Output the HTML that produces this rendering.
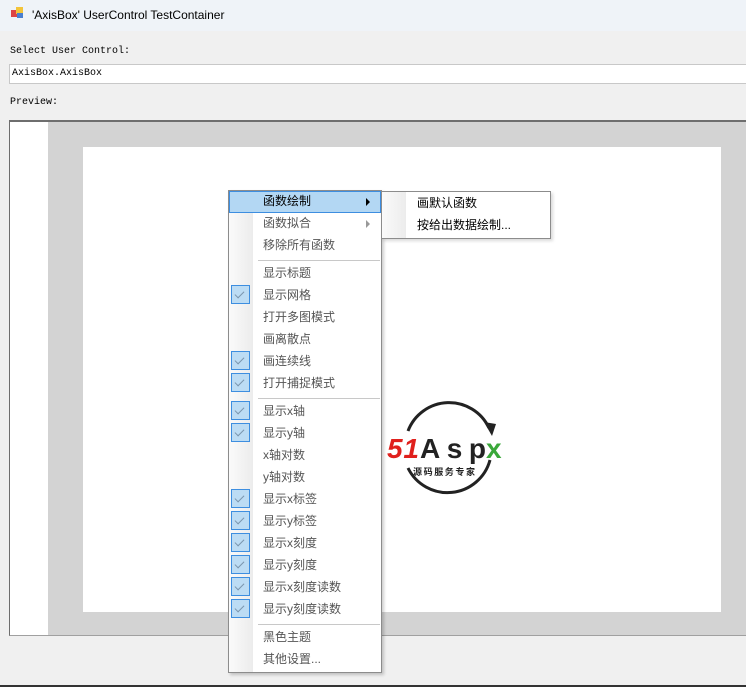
<!DOCTYPE html>
<html><head><meta charset="utf-8"><style>
*{margin:0;padding:0;box-sizing:border-box}
body{width:746px;height:687px;background:#f0f0f0;position:relative;overflow:hidden;font-family:"Liberation Sans","Noto Sans CJK SC",sans-serif}
.a{position:absolute}
.mono{font-family:"Liberation Mono","Noto Sans CJK SC",monospace;font-size:10px;color:#000}
.mi{position:absolute;left:263px;font-size:12px;color:#555;line-height:22px;height:22px}
.cb{position:absolute;left:231px;width:19px;height:19px;background:#bcdcf4;border:1px solid #3d8ee0}
.cb:after{content:"";position:absolute;left:5px;top:3px;width:4px;height:8px;border:solid #7a95ad;border-width:0 1.5px 1.5px 0;transform:rotate(45deg)}
.sep{position:absolute;left:258px;width:122px;height:1px;background:#c8c8c8}
</style></head><body>
<div class="a" style="left:0;top:0;width:746px;height:31px;background:#eff3f8"></div>
<div class="a" style="left:11px;top:10px;width:7px;height:7px;background:#d44"></div>
<div class="a" style="left:16px;top:7px;width:7px;height:7px;background:#f3c43a"></div>
<div class="a" style="left:17px;top:13px;width:6px;height:5px;background:#4a7fd0"></div>
<div class="a" style="left:32px;top:8px;font-size:12px;color:#000">'AxisBox' UserControl TestContainer</div>
<div class="a mono" style="left:10px;top:46px">Select User Control:</div>
<div class="a" style="left:9px;top:64px;width:737px;height:20px;background:#fff;border:1px solid #c8c8c8;border-right:none"></div>
<div class="a mono" style="left:12px;top:68px">AxisBox.AxisBox</div>
<div class="a mono" style="left:10px;top:97px">Preview:</div>
<div class="a" style="left:9px;top:120px;width:737px;height:516px;background:#fff;border-top:2px solid #6e6e6e;border-left:1px solid #6e6e6e;border-bottom:1px solid #a0a0a0"></div>
<div class="a" style="left:48px;top:122px;width:698px;height:513px;background:#d3d3d3"></div>
<div class="a" style="left:83px;top:147px;width:638px;height:465px;background:#fff"></div>
<div class="a" style="left:0;top:685px;width:746px;height:2px;background:#333"></div>
<svg class="a" style="left:380px;top:398px" width="140" height="100">
<path d="M28 33 A44 44 0 0 1 109 30" fill="none" stroke="#222" stroke-width="3"/>
<path d="M104 24 L112 38 L116 26 Z" fill="#222"/>
<path d="M110 62 A44 44 0 0 1 28 70" fill="none" stroke="#222" stroke-width="3"/>
<text x="7" y="60" font-family="Liberation Sans" font-weight="bold" font-style="italic" font-size="28" fill="#e0201d" textLength="32">51</text>
<text x="40" y="60" font-family="Liberation Sans" font-weight="bold" font-size="28" fill="#222" textLength="66">Asp</text>
<text x="106" y="60" font-family="Liberation Sans" font-weight="bold" font-size="28" fill="#3aa83a">x</text>
<text x="33" y="77" font-family="Noto Sans CJK SC" font-size="9" font-weight="bold" fill="#222" textLength="62">源码服务专家</text>
</svg>
<div class="a" style="left:228px;top:190px;width:154px;height:483px;background:#fff;border:1px solid #8c8c8c;box-shadow:2px 2px 3px rgba(0,0,0,.2)"></div>
<div class="a" style="left:229px;top:191px;width:24px;height:481px;background:linear-gradient(90deg,#fafafa,#ececec)"></div>
<div class="a" style="left:229px;top:191px;width:152px;height:22px;background:#b3d7f3;border:1px solid #3d8ee0"></div>
<div class="mi" style="top:190px;color:#000">函数绘制</div>
<div class="a" style="left:366px;top:198px;border-left:4px solid #000;border-top:4px solid transparent;border-bottom:4px solid transparent"></div>
<div class="mi" style="top:212px">函数拟合</div>
<div class="a" style="left:366px;top:220px;border-left:4px solid #999;border-top:4px solid transparent;border-bottom:4px solid transparent"></div>
<div class="mi" style="top:234px">移除所有函数</div>
<div class="sep" style="top:260px"></div>
<div class="mi" style="top:262px">显示标题</div>
<div class="cb" style="top:285px"></div><div class="mi" style="top:284px">显示网格</div>
<div class="mi" style="top:306px">打开多图模式</div>
<div class="mi" style="top:328px">画离散点</div>
<div class="cb" style="top:351px"></div><div class="mi" style="top:350px">画连续线</div>
<div class="cb" style="top:373px"></div><div class="mi" style="top:372px">打开捕捉模式</div>
<div class="sep" style="top:398px"></div>
<div class="cb" style="top:401px"></div><div class="mi" style="top:400px">显示x轴</div>
<div class="cb" style="top:423px"></div><div class="mi" style="top:422px">显示y轴</div>
<div class="mi" style="top:444px">x轴对数</div>
<div class="mi" style="top:466px">y轴对数</div>
<div class="cb" style="top:489px"></div><div class="mi" style="top:488px">显示x标签</div>
<div class="cb" style="top:511px"></div><div class="mi" style="top:510px">显示y标签</div>
<div class="cb" style="top:533px"></div><div class="mi" style="top:532px">显示x刻度</div>
<div class="cb" style="top:555px"></div><div class="mi" style="top:554px">显示y刻度</div>
<div class="cb" style="top:577px"></div><div class="mi" style="top:576px">显示x刻度读数</div>
<div class="cb" style="top:599px"></div><div class="mi" style="top:598px">显示y刻度读数</div>
<div class="sep" style="top:624px"></div>
<div class="mi" style="top:626px">黑色主题</div>
<div class="mi" style="top:648px">其他设置...</div>
<div class="a" style="left:381px;top:191px;width:170px;height:48px;background:#fff;border:1px solid #8c8c8c;box-shadow:2px 2px 3px rgba(0,0,0,.15)"></div>
<div class="a" style="left:382px;top:192px;width:24px;height:46px;background:linear-gradient(90deg,#fafafa,#ececec)"></div>
<div class="mi" style="left:417px;top:192px;color:#000">画默认函数</div>
<div class="mi" style="left:417px;top:214px;color:#000">按给出数据绘制...</div>
</body></html>
